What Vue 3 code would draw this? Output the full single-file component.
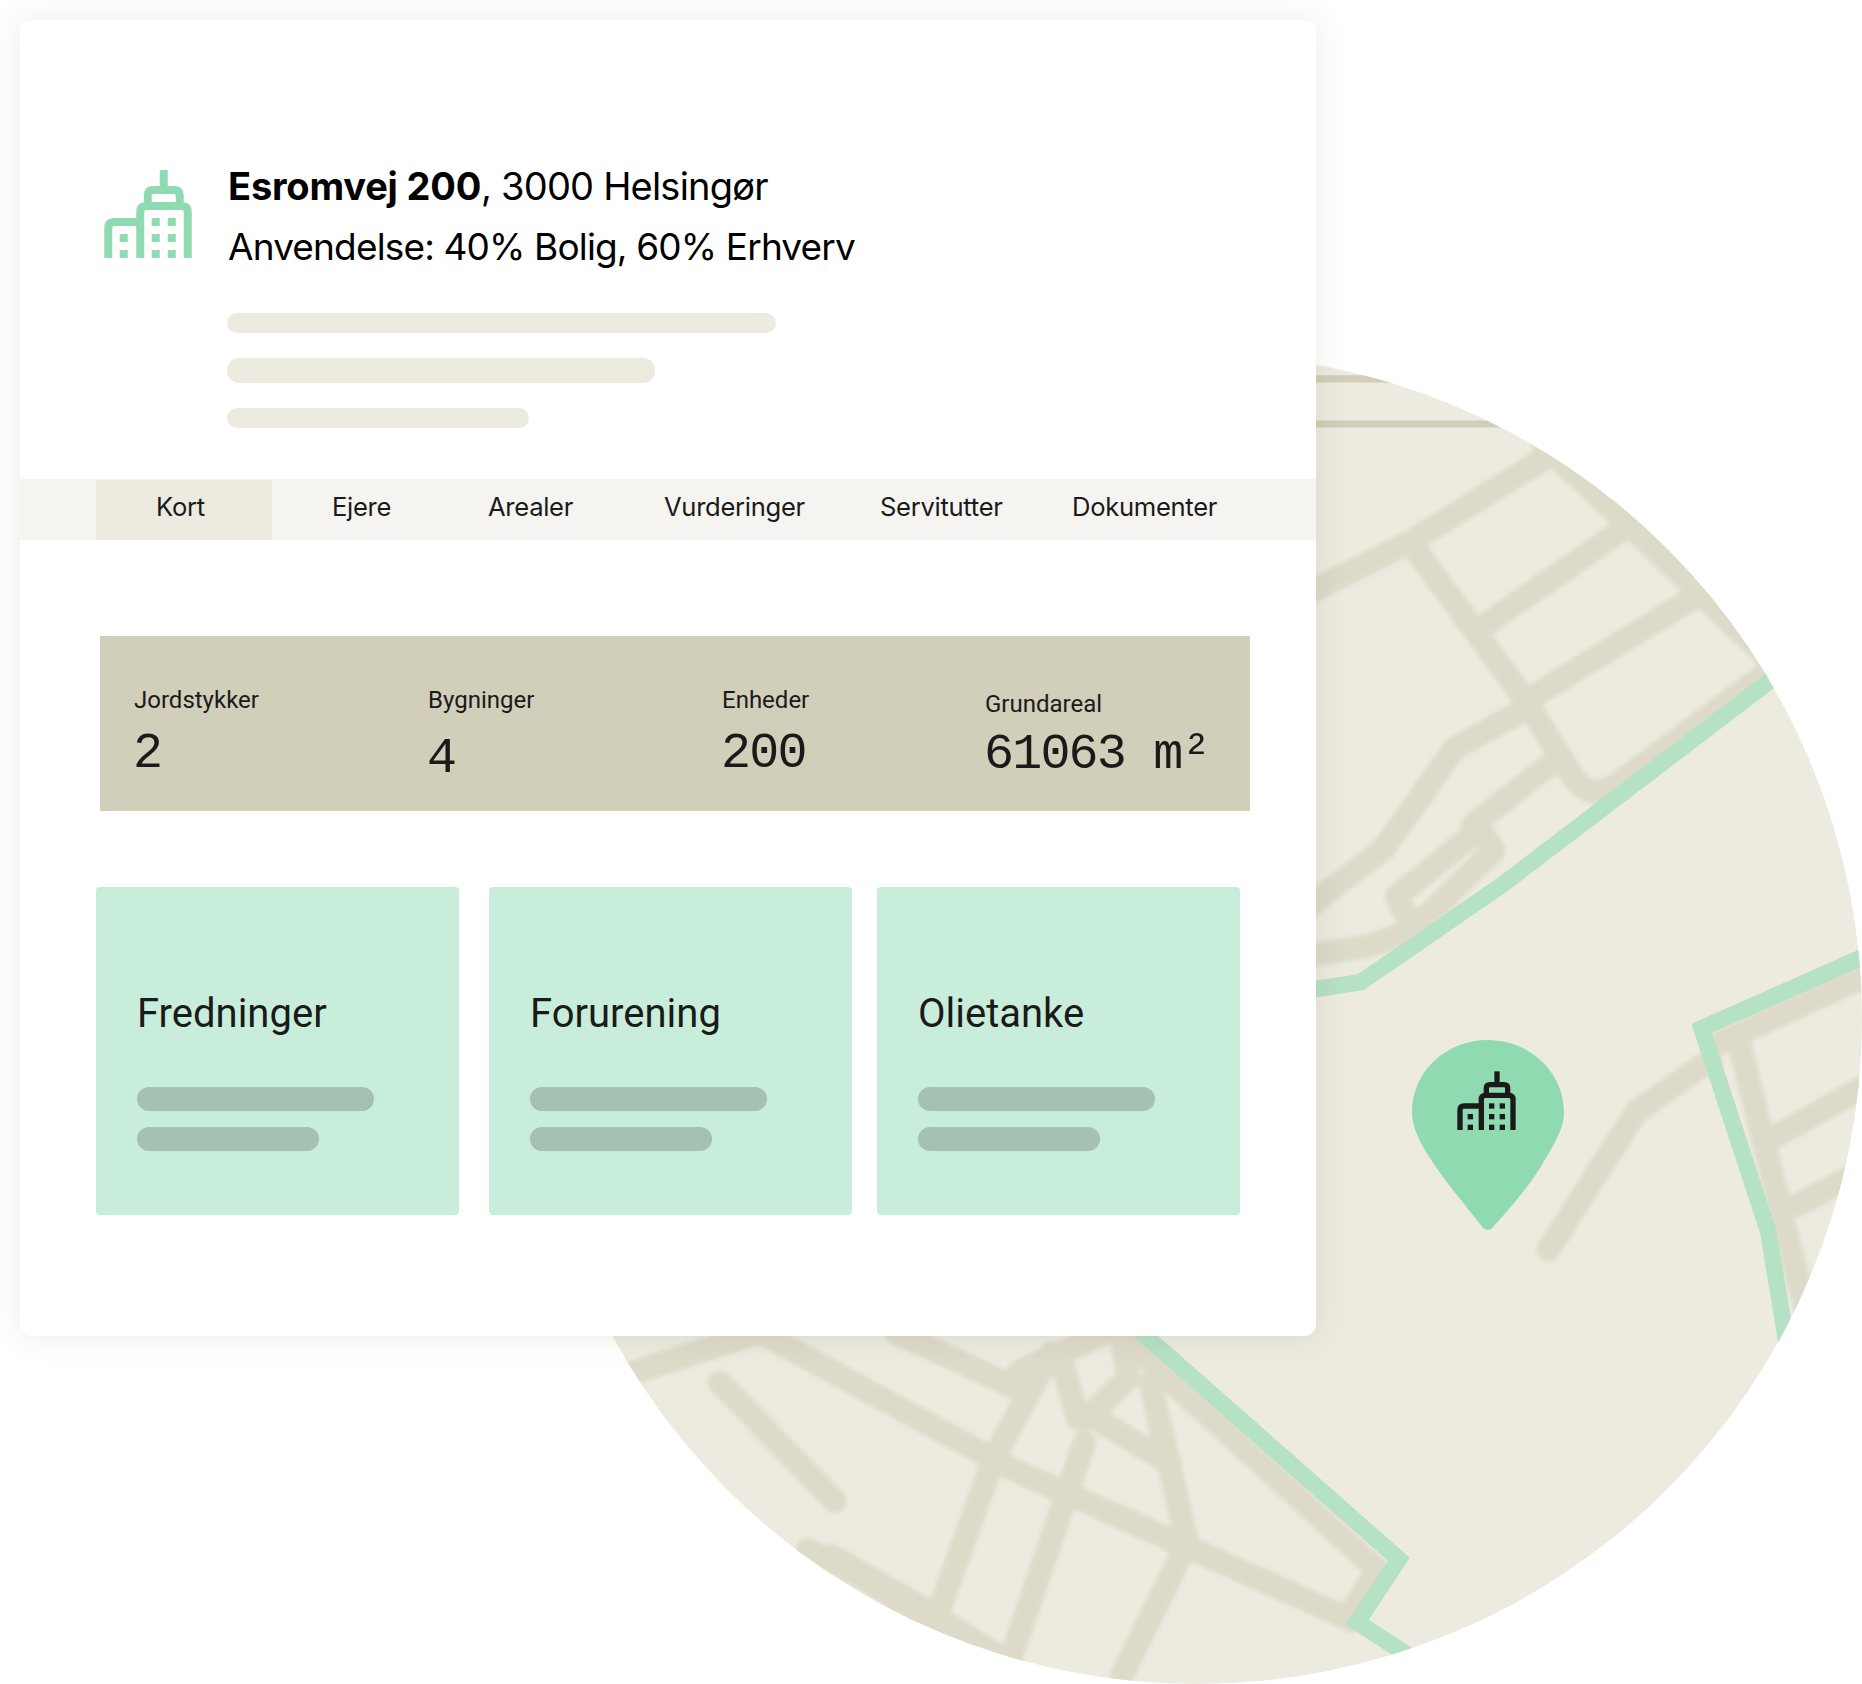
<script setup>
const tabs = ['Kort', 'Ejere', 'Arealer', 'Vurderinger', 'Servitutter', 'Dokumenter']
const stats = [
  { label: 'Jordstykker', value: '2', cls: 's1' },
  { label: 'Bygninger', value: '4', cls: 's2' },
  { label: 'Enheder', value: '200', cls: 's3' },
  { label: 'Grundareal', value: '61063 m²', cls: 's4' },
]
const cards = ['Fredninger', 'Forurening', 'Olietanke']
const windows = [[443, 402], [443, 434], [507, 370], [539, 370], [507, 402], [539, 402], [507, 434], [539, 434]]
const roads = [
  'M1100 500 L1190 455 L1310 380',
  'M1190 460 L1285 590 L1325 655 Q1340 675 1362 660 L1490 565',
  'M1245 530 L1375 440',
  'M1285 590 L1440 495',
  'M1300 375 L1375 445 L1500 565',
  'M1100 765 L1165 715 L1225 630 L1285 597',
  'M1100 805 L1150 797 Q1180 790 1205 768 L1258 716 L1246 698 L1176 755 L1187 776',
  'M1240 695 L1310 640',
  'M1304 1052 L1378 936 L1440 893',
  'M1448 878 L1568 823',
  'M1465 880 L1508 1053 L1520 1100',
  'M1493 958 L1568 916',
  'M1513 1015 L1560 990',
  'M606 1164 L703 1264',
  'M520 1160 L640 1122',
  'M640 1122 L850 1236 L1140 1365',
  'M755 1122 L862 1172',
  'M680 1305 L770 1350 L850 1400',
  'M885 1140 L838 1225 L775 1400',
  'M913 1215 L850 1400',
  'M997 1305 L945 1410',
  'M969 1165 L1001 1305',
  'M915 1190 L985 1232',
  'M950 1130 L1160 1322 L1135 1362',
  'M858 1155 L932 1122',
  'M895 1150 L908 1195',
  'M945 1125 L950 1160 L915 1195',
]
</script>

<template>
  <div class="page">
    <svg class="map" viewBox="0 0 1568 1418" aria-hidden="true">
      <defs>
        <clipPath id="disc"><circle cx="1008" cy="858" r="560" /></clipPath>
        <filter id="soft" x="-5%" y="-5%" width="110%" height="110%"><feGaussianBlur stdDeviation="1.8" /></filter>
      </defs>
      <g clip-path="url(#disc)">
        <rect x="440" y="290" width="1130" height="1130" fill="#edebe0" />
        <path d="M1100 319 H1190 M1100 357 H1280" stroke="#d1cdb9" stroke-width="6" fill="none" />
        <g filter="url(#soft)" fill="none" stroke="#dddac9" stroke-width="20" stroke-linecap="round" stroke-linejoin="round">
          <path v-for="d in roads" :key="d" :d="d" />
          <path d="M700 1310 L770 1350 L790 1420 L860 1420Z" fill="#dddac9" />
        </g>
        <g fill="none" stroke="#b5e1c5" stroke-width="14" stroke-linejoin="miter">
          <path d="M1100 834 L1146 827 L1265 745 L1500 566" />
          <path d="M1575 803 L1433 866 L1489 1037 L1506 1140" />
          <path d="M950 1112 L1178 1313 L1143 1366 L1195 1400" />
        </g>
      </g>
    </svg>

    <svg class="pin" viewBox="0 0 900 900" aria-hidden="true">
      <path fill="#90dab2" d="M503 180 C378 180 276 275 276 397 C276 440 300 490 330 535 C375 605 440 680 490 745 Q503 755 516 745 C570 685 640 605 680 530 C710 480 732 440 732 397 C732 275 628 180 503 180Z" />
      <g fill="none" stroke="#1a1a1a" stroke-width="16">
        <path d="M531 274 V314" />
        <path d="M499 342 V325 Q499 314 510 314 H552 Q563 314 563 325 V342" />
        <path d="M484 450 V358 Q484 346 496 346 H567 Q579 346 579 358 V450" />
        <path d="M420 450 V390 Q420 378 432 378 H484" />
      </g>
      <g fill="#1a1a1a">
        <rect v-for="w in windows" :key="w.join()" :x="w[0]" :y="w[1]" width="16" height="16" />
      </g>
    </svg>

    <section class="card">
      <header class="head">
        <svg class="icon" viewBox="412 274 175 176" aria-hidden="true">
          <g fill="none" stroke="#90dab2" stroke-width="16">
            <path d="M531 274 V314" />
            <path d="M499 342 V325 Q499 314 510 314 H552 Q563 314 563 325 V342" />
            <path d="M484 450 V358 Q484 346 496 346 H567 Q579 346 579 358 V450" />
            <path d="M420 450 V390 Q420 378 432 378 H484" />
          </g>
          <g fill="#90dab2">
            <rect v-for="w in windows" :key="w.join()" :x="w[0]" :y="w[1]" width="16" height="16" />
          </g>
        </svg>
        <div class="info">
          <p class="line first"><strong>Esromvej 200</strong>, 3000 Helsingør</p>
          <p class="line second">Anvendelse: 40% Bolig, 60% Erhverv</p>
          <div class="skel s-a"></div>
          <div class="skel s-b"></div>
          <div class="skel s-c"></div>
        </div>
      </header>

      <nav class="tabs">
        <div v-for="(t, i) in tabs" :key="t" class="tab" :class="{ active: i === 0 }">{{ t }}</div>
      </nav>

      <div class="stats">
        <div v-for="s in stats" :key="s.label" class="stat" :class="s.cls">
          <div class="label">{{ s.label }}</div>
          <div class="value">{{ s.value }}</div>
        </div>
      </div>

      <div class="cards">
        <article v-for="c in cards" :key="c" class="tile">
          <h3>{{ c }}</h3>
          <div class="bar long"></div>
          <div class="bar short"></div>
        </article>
      </div>
    </section>
  </div>
</template>

<style scoped>
.page {
  position: relative;
  width: 1862px;
  height: 1684px;
  background: #fff;
  overflow: hidden;
  padding: 20px 0 0 20px;
  box-sizing: border-box;
}
.map {
  position: absolute;
  left: 0;
  top: 0;
  width: 1862px;
  height: 1684px;
}
.pin {
  position: absolute;
  left: 1320px;
  top: 980px;
  width: 300px;
  height: 300px;
}
.card {
  position: relative;
  width: 1296px;
  height: 1316px;
  background: #fff;
  border-radius: 12px;
  box-shadow: 0 0 32px rgba(60, 55, 30, 0.1);
  overflow: hidden;
}
.head {
  display: flex;
  height: 459px;
  box-sizing: border-box;
  padding: 150px 0 0 84px;
}
.icon {
  width: 88px;
  height: 88px;
  flex: none;
}
.info {
  margin-left: 35px;
  margin-top: -14px;
}
.line {
  margin: 0;
  height: 61px;
  color: #000;
  white-space: nowrap;
  padding-left: 1px;
}
.first {
  font: 400 38px/61px Inter, sans-serif;
  letter-spacing: -0.8px;
}
.first strong {
  font-weight: 700;
  letter-spacing: -0.2px;
}
.second {
  font: 400 37px/59px Inter, sans-serif;
  letter-spacing: -0.85px;
}
.skel {
  background: #edebe0;
  border-radius: 10px;
}
.s-a { width: 549px; height: 20px; margin-top: 35px; }
.s-b { width: 428px; height: 25px; margin-top: 25px; border-radius: 12px; }
.s-c { width: 302px; height: 20px; margin-top: 25px; }
.tabs {
  display: grid;
  grid-template-columns: 176px 216px 176px 216px 192px auto;
  height: 61px;
  padding-left: 76px;
  background: #f5f4f0;
  font: 400 25.6px/54px Inter, sans-serif;
  letter-spacing: -0.3px;
  color: #1a1a1a;
}
.tab {
  height: 60px;
  margin-top: 1px;
  white-space: nowrap;
}
.tab:nth-child(1) { padding-left: 60px; }
.tab:nth-child(2) { padding-left: 60px; }
.active { background: #edebe0; }
.stats {
  display: grid;
  grid-template-columns: 294px 294px 263px auto;
  width: 1150px;
  height: 175px;
  box-sizing: border-box;
  margin: 96px 0 0 80px;
  padding: 49px 0 0 34px;
  background: #d1ceba;
  color: #1a1a1a;
}
.label {
  font: 400 24px/30px Roboto, sans-serif;
}
.value {
  font: 400 50px/54px "Liberation Mono", monospace;
  letter-spacing: -1.8px;
  margin: 12px 0 0 -1px;
}
.s2 .value { margin-top: 17px; }
.s4 { padding-top: 4px; }
.s4 .value { margin-top: 9px; }
.cards {
  display: flex;
  margin: 76px 0 0 76px;
}
.tile {
  width: 363px;
  height: 328px;
  box-sizing: border-box;
  padding: 101px 0 0 41px;
  background: #c8eedb;
  border-radius: 4px;
}
.tile:nth-child(2) { margin: 0 25px 0 30px; }
.tile h3 {
  margin: 0;
  font: 400 40px/52px Roboto, sans-serif;
  color: #1a1a1a;
}
.bar {
  height: 24px;
  border-radius: 12px;
  background: #a5c1b2;
}
.long { width: 237px; margin-top: 47px; }
.short { width: 182px; margin-top: 16px; }
</style>
